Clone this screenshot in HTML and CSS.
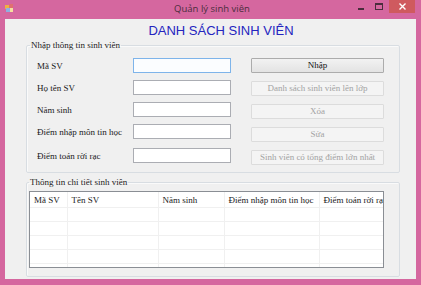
FILE: index.html
```html
<!DOCTYPE html>
<html lang="vi">
<head>
    <meta charset="UTF-8">
    <meta name="viewport" content="width=device-width, initial-scale=1.0">
    <title>Quản lý sinh viên</title>
    <link rel="stylesheet" href="styles.css">
</head>
<body>
    <div class="window">
        <div class="titlebar">
            <svg class="app-icon" width="9" height="9" viewBox="0 0 9 9">
                <rect x="0" y="1" width="4" height="4" fill="#f0b040"/>
                <rect x="4" y="0" width="4" height="4" fill="#e07070"/>
                <rect x="1" y="4" width="4" height="4" fill="#8fb0e0"/>
                <rect x="5" y="4" width="3" height="4" fill="#f4e0a0"/>
            </svg>
            <div class="caption">Quản lý sinh viên</div>
            <div class="controls">
                <span class="ctl min"></span>
                <span class="ctl max"></span>
                <span class="ctl close">
                    <svg width="7" height="7" viewBox="0 0 7 7"><path d="M0.5 0.5L6.5 6.5M6.5 0.5L0.5 6.5" stroke="#fff" stroke-width="1.4"/></svg>
                </span>
            </div>
        </div>
        <div class="client">
            <h1>DANH SÁCH SINH VIÊN</h1>

            <fieldset class="group input-group">
                <legend>Nhập thông tin sinh viên</legend>
                <div class="group-body">
                    <div class="fields">
                        <label>Mã SV</label><input type="text" class="focused">
                        <label>Họ tên SV</label><input type="text">
                        <label>Năm sinh</label><input type="text">
                        <label>Điểm nhập môn tin học</label><input type="text">
                        <label class="last">Điểm toán rời rạc</label><input type="text" class="last">
                    </div>
                    <div class="actions">
                        <button class="btn">Nhập</button>
                        <button class="btn" disabled>Danh sách sinh viên lên lớp</button>
                        <button class="btn" disabled>Xóa</button>
                        <button class="btn" disabled>Sửa</button>
                        <button class="btn" disabled>Sinh viên có tổng điểm lớn nhất</button>
                    </div>
                </div>
            </fieldset>

            <fieldset class="group list-group">
                <legend>Thông tin chi tiết sinh viên</legend>
                <div class="listview">
                    <table>
                        <colgroup>
                            <col style="width:37px">
                            <col style="width:91px">
                            <col style="width:66px">
                            <col style="width:95px">
                            <col style="width:80px">
                        </colgroup>
                        <thead>
                            <tr>
                                <th>Mã SV</th>
                                <th>Tên SV</th>
                                <th>Năm sinh</th>
                                <th>Điểm nhập môn tin học</th>
                                <th>Điểm toán rời rạc</th>
                            </tr>
                        </thead>
                        <tbody id="rows"></tbody>
                    </table>
                </div>
            </fieldset>
        </div>
    </div>
    <script>
        const rows = document.getElementById('rows');
        for (let i = 0; i < 5; i++) {
            const tr = document.createElement('tr');
            tr.innerHTML = '<td></td><td></td><td></td><td></td><td></td>';
            rows.appendChild(tr);
        }
    </script>
</body>
</html>
```

FILE: styles.css
```css
body {
    margin: 0;
    font-family: "Liberation Serif", serif;
    font-size: 9px;
    color: #1a1a1a;
}
.window {
    width: 421px;
    height: 285px;
    background: #d5679f;
    display: flex;
    flex-direction: column;
    padding: 0 5px 6px 5px;
    box-sizing: border-box;
}
.titlebar {
    height: 19px;
    display: flex;
    align-items: center;
    position: relative;
}
.app-icon {
    margin-left: 0;
    margin-top: -3px;
}
.caption {
    flex: 1;
    text-align: center;
    font-family: "Open Sans", sans-serif;
    font-size: 9.5px;
    color: #4a2d3c;
    margin-top: -2px;
    padding-right: 6px;
}
.controls {
    position: absolute;
    right: 1px;
    top: 0;
    display: flex;
    align-items: flex-start;
}
.ctl {
    display: block;
    width: 18px;
    height: 13px;
    position: relative;
}
.min::after {
    content: "";
    position: absolute;
    left: 5px;
    top: 8px;
    width: 6px;
    height: 2px;
    background: #4a2d3c;
}
.max::after {
    content: "";
    position: absolute;
    left: 4px;
    top: 3px;
    width: 6px;
    height: 4px;
    border: 1px solid #4a2d3c;
    border-top-width: 2px;
}
.close {
    width: 26px;
    background: #cf5a5f;
    display: flex;
    align-items: center;
    justify-content: center;
}
.client {
    flex: 1;
    background: #f0f0f0;
    padding: 0 16px 0 21px;
    display: flex;
    flex-direction: column;
    min-width: 0;
}
h1 {
    margin: 0;
    height: 21px;
    padding-top: 4px;
    padding-left: 16px;
    box-sizing: border-box;
    text-align: center;
    font-family: "Liberation Sans", Arial, sans-serif;
    font-size: 13px;
    font-weight: normal;
    color: #2424bf;
    line-height: 15px;
}
.group {
    margin: 0;
    min-width: 0;
    border: 1px solid #d8dde2;
    border-radius: 2px;
    padding: 7px 3px 7px 3px;
    box-shadow: inset 1px 1px 0 #fafafa;
}
.group legend {
    padding: 0 1px;
    line-height: 11px;
    color: #1a1a1a;
}
.group-body {
    display: flex;
    padding-left: 7px;
}
.fields {
    display: grid;
    grid-template-columns: 96px 98px;
    grid-auto-rows: 15px;
    row-gap: 7px;
    align-items: center;
}
.fields .last {
    margin-top: 4px;
}
.fields input {
    width: 98px;
    height: 15px;
    box-sizing: border-box;
    border: 1px solid #abadb3;
    background: #fff;
    margin: 0;
    padding: 0 2px;
    font: inherit;
}
.fields input.focused {
    border-color: #7eb4ea;
    background: #fbfdff;
}
.actions {
    margin-left: 20px;
    display: flex;
    flex-direction: column;
    gap: 8px;
}
.btn {
    width: 133px;
    height: 15px;
    margin: 0;
    padding: 0;
    box-sizing: border-box;
    border: 1px solid #acacac;
    border-radius: 1px;
    background: linear-gradient(#f2f2f2, #e3e3e3);
    font-family: "Liberation Serif", serif;
    font-size: 9px;
    color: #111;
    line-height: 13px;
}
.btn:disabled {
    border-color: #dcdcdc;
    background: #f4f4f4;
    color: #a3a3a3;
}
.list-group {
    margin-top: 4px;
    padding: 3px 15px 6px 2px;
    flex: 1;
    margin-bottom: 2px;
}
.listview {
    height: 77px;
    border: 1px solid #8a8e94;
    background: #fff;
    overflow: hidden;
    box-sizing: border-box;
}
.listview table {
    border-collapse: collapse;
    table-layout: fixed;
    width: 369px;
}
.listview th {
    height: 15px;
    padding: 0 0 0 4px;
    text-align: left;
    font-weight: normal;
    white-space: nowrap;
    overflow: hidden;
    border-right: 1px solid #f0f0f0;
    border-bottom: 1px solid #f0f0f0;
    font-size: 9px;
}
.listview td {
    height: 13px;
    padding: 0;
    border-right: 1px solid #f0f0f0;
    border-bottom: 1px solid #f0f0f0;
}
```
